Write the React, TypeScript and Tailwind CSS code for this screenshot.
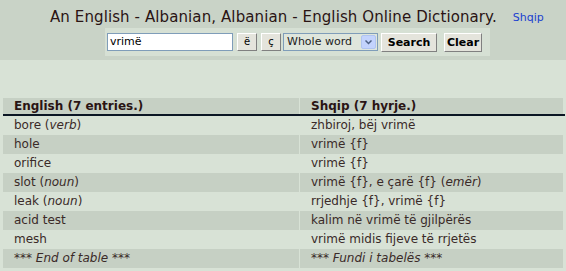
import React from "react";

const rows: { en: React.ReactNode; sq: React.ReactNode }[] = [
  { en: <>bore (<i>verb</i>)</>, sq: <>zhbiroj, bëj vrimë</> },
  { en: <>hole</>, sq: <>vrimë {"{f}"}</> },
  { en: <>orifice</>, sq: <>vrimë {"{f}"}</> },
  { en: <>slot (<i>noun</i>)</>, sq: <>vrimë {"{f}"}, e çarë {"{f}"} (<i>emër</i>)</> },
  { en: <>leak (<i>noun</i>)</>, sq: <>rrjedhje {"{f}"}, vrimë {"{f}"}</> },
  { en: <>acid test</>, sq: <>kalim në vrimë të gjilpërës</> },
  { en: <>mesh</>, sq: <>vrimë midis fijeve të rrjetës</> },
  { en: <><i>*** End of table ***</i></>, sq: <><i>*** Fundi i tabelës ***</i></> },
];

export default function App() {
  return (
    <div
      className="w-[566px] h-[271px] overflow-hidden bg-[#d8e2d6] text-[#3a2a28]"
      style={{ fontFamily: "'DejaVu Sans', Verdana, sans-serif" }}
    >
      <div className="h-[60px] bg-[#c9d3c7] flex flex-col">
        <div className="flex items-end h-[26px]">
          <div className="pl-[50px] text-[15px] leading-[18px] tracking-[0.1px] text-[#2a1414] whitespace-nowrap">
            An English - Albanian, Albanian - English Online Dictionary.
          </div>
          <a className="ml-[16px] text-[11px] leading-[16px] text-[#1a3fd0]">Shqip</a>
        </div>
        <div className="ml-[105px] mt-[2px] w-[385px] h-[28px] bg-[#d6e0d4] flex items-start pt-[5px] pl-[2px]">
          <div className="w-[126px] h-[18px] bg-white border border-[#7f9db9] text-[11px] leading-[16px] pl-[2px] text-black">
            vrimë
          </div>
          <button className="ml-[4px] w-[20px] h-[18px] bg-[#e4e4dc] border border-[#fff] border-r-[#808080] border-b-[#808080] text-[10px] leading-[14px] text-black">
            ë
          </button>
          <button className="ml-[4px] w-[20px] h-[18px] bg-[#e4e4dc] border border-[#fff] border-r-[#808080] border-b-[#808080] text-[10px] leading-[14px] text-black">
            ç
          </button>
          <div className="ml-[2px] w-[95px] h-[18px] bg-[#dfe6dc] border border-[#7f9db9] flex items-center text-[11px] text-[#222]">
            <span className="pl-[3px] flex-1 leading-[16px]">Whole word</span>
            <span className="w-[15px] h-[14px] mr-[1px] bg-[#c3d3fd] border border-[#b0c4f0] rounded-[2px] flex items-center justify-center">
              <svg width="7" height="5" viewBox="0 0 7 5">
                <path d="M0.5 0.5 L3.5 3.5 L6.5 0.5" stroke="#4d6185" strokeWidth="1.5" fill="none" />
              </svg>
            </span>
          </div>
          <button className="ml-[3px] w-[56px] h-[19px] bg-[#e4e4dc] border border-[#fff] border-r-[#808080] border-b-[#808080] text-[11px] font-bold leading-[15px] text-black">
            Search
          </button>
          <button className="ml-[7px] w-[38px] h-[19px] bg-[#e4e4dc] border border-[#fff] border-r-[#808080] border-b-[#808080] text-[11px] font-bold leading-[15px] text-black">
            Clear
          </button>
        </div>
      </div>
      <div className="h-[38px]" />
      <div className="ml-[3px] w-[560px]">
        <div className="grid grid-cols-[296px_263px] gap-x-[1px] h-[16px] text-[12px] font-bold leading-[16px] text-[#2a1414]">
          <div className="bg-[#c6d0c4] pl-[11px]">English (7 entries.)</div>
          <div className="bg-[#c6d0c4] pl-[11px]">Shqip (7 hyrje.)</div>
        </div>
        <div className="h-[2px] bg-[#0b1624] w-[562px]" />
        {rows.map((r, i) => (
          <div
            key={i}
            className="grid grid-cols-[296px_263px] gap-x-[1px] h-[19px] text-[12px] leading-[18px]"
          >
            <div className={(i % 2 === 1 ? "bg-[#c6d0c4] " : "") + "pl-[11px] whitespace-nowrap"}>{r.en}</div>
            <div className={(i % 2 === 1 ? "bg-[#c6d0c4] " : "") + "pl-[11px] whitespace-nowrap"}>{r.sq}</div>
          </div>
        ))}
      </div>
    </div>
  );
}
